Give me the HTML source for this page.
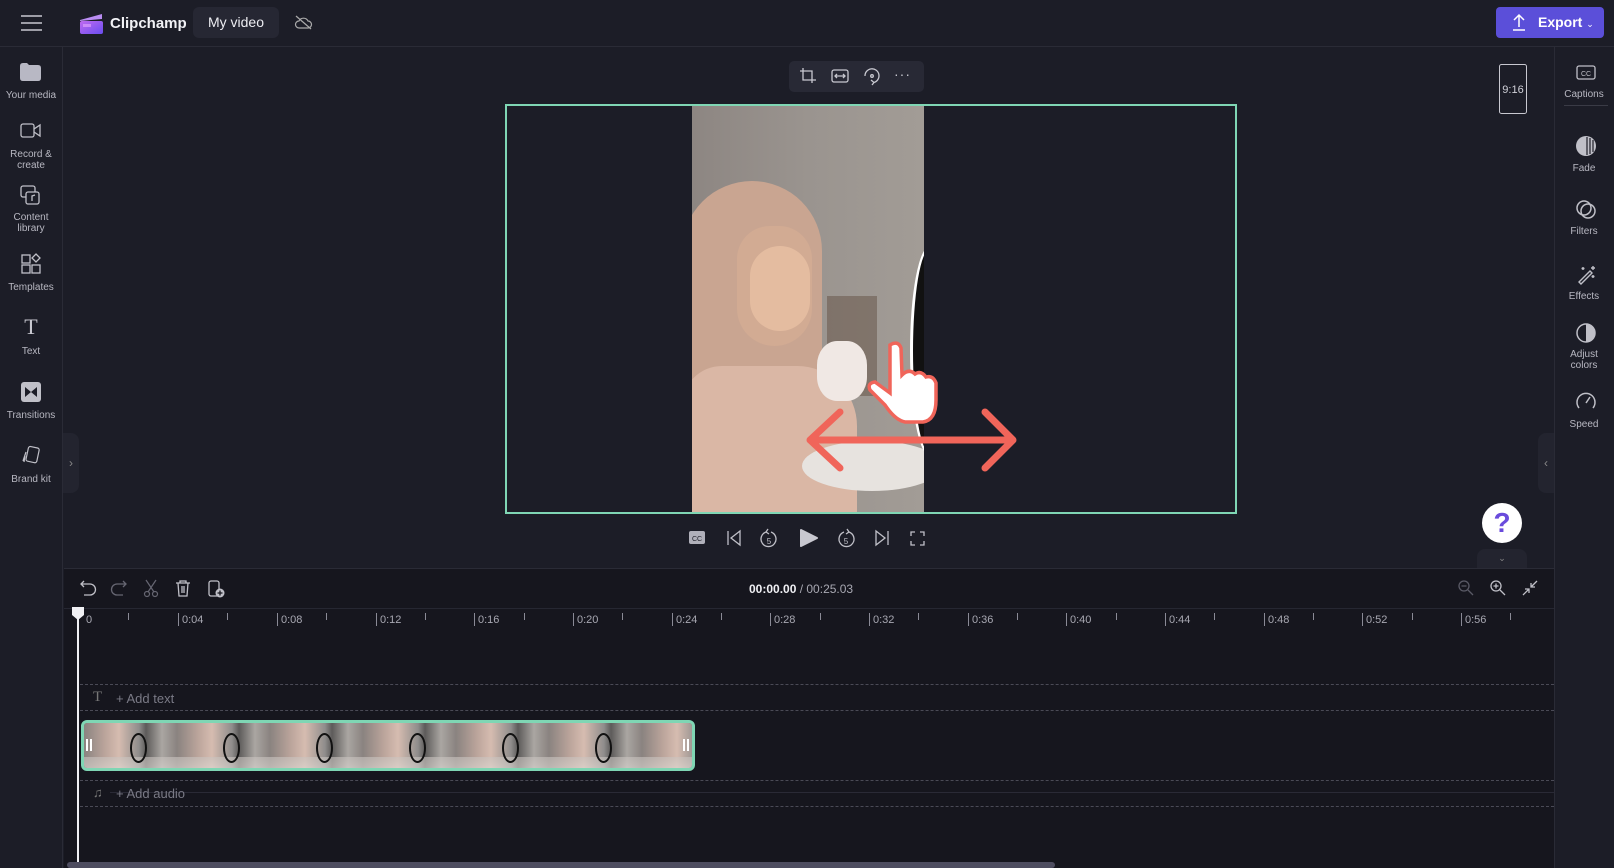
<!DOCTYPE html>
<html><head><meta charset="utf-8"><style>
*{margin:0;padding:0;box-sizing:border-box}
body{width:1614px;height:868px;overflow:hidden;background:#1c1d27;font-family:"Liberation Sans",sans-serif;color:#d0d0d8;position:relative}
.a{position:absolute}
.lbl{position:absolute;width:62px;text-align:center;font-size:10px;color:#b8b8c2;line-height:11px}
.rl{position:absolute;left:1554px;width:60px;text-align:center;font-size:10px;color:#b8b8c2;line-height:11px}
svg{position:absolute;overflow:visible}
.tk{position:absolute;top:613px;width:1px;height:13px;background:#8a8a96}
.mt{position:absolute;top:613px;width:1px;height:7px;background:#8a8a96}
.tl{position:absolute;top:614px;font-size:11px;color:#a8a8b2}
.dash{position:absolute;left:80px;width:1474px;height:0;border-top:1px dashed #4a4a56}
.ring{position:absolute;top:10px;width:17px;height:30px;border:2.5px solid #111;border-radius:50%}
</style></head><body>
<!-- top bar -->
<div class="a" style="left:0;top:0;width:1614px;height:47px;background:#1c1d27;border-bottom:1px solid #2a2b36"></div>
<svg style="left:21px;top:15px" width="21" height="16"><g stroke="#c8c8d0" stroke-width="1.6"><line x1="0" y1="1" x2="21" y2="1"/><line x1="0" y1="8" x2="21" y2="8"/><line x1="0" y1="15" x2="21" y2="15"/></g></svg>
<svg style="left:79px;top:11px" width="25" height="24"><defs><linearGradient id="lg" x1="0" y1="0" x2="1" y2="1"><stop offset="0" stop-color="#c06af0"/><stop offset="1" stop-color="#6a4df0"/></linearGradient></defs><path d="M1 9 L23 3 L23 8 L1 10Z" fill="#b98cf2"/><rect x="1" y="10" width="23" height="13" rx="2" fill="url(#lg)"/><rect x="4" y="13" width="8" height="3" fill="#e4a6ff" opacity=".6"/></svg>
<div class="a" style="left:110px;top:15px;font-size:15px;color:#f2f2f6;font-weight:bold">Clipchamp</div>
<div class="a" style="left:193px;top:7px;width:86px;height:31px;background:#262733;border-radius:6px;font-size:14px;color:#ededf2;text-align:center;line-height:31px">My video</div>
<svg style="left:295px;top:15px" width="17" height="15"><path d="M4 13 H13 A3.5 3.5 0 0 0 13 6 A5 5 0 0 0 4 6 A3.5 3.5 0 0 0 4 13Z" fill="none" stroke="#aaa" stroke-width="1.2"/><line x1="1" y1="1" x2="16" y2="14" stroke="#aaa" stroke-width="1.2"/></svg>
<div class="a" style="left:1496px;top:7px;width:108px;height:31px;background:#5b4fd9;border-radius:4px;color:#fff;font-size:14px;font-weight:bold;line-height:31px;padding-left:42px">Export <span style="font-weight:normal;font-size:9px">&#8964;</span></div>
<svg style="left:1512px;top:14px" width="14" height="17"><g stroke="#fff" stroke-width="1.5" fill="none"><path d="M7 13 V1 M2 6 L7 1 L12 6"/><line x1="1" y1="16" x2="13" y2="16"/></g></svg>

<!-- left sidebar -->
<div class="a" style="left:62px;top:47px;width:1px;height:821px;background:#2a2b36"></div>
<svg style="left:20px;top:63px" width="21" height="18"><path d="M0 3 Q0 0 3 0 H7 L9 2 H18 Q21 2 21 5 V15 Q21 18 18 18 H3 Q0 18 0 15Z" fill="#b8b8c4"/></svg>
<div class="lbl" style="left:0;top:90px">Your media</div>
<svg style="left:20px;top:123px" width="21" height="16"><g fill="none" stroke="#c0c0c8" stroke-width="1.3"><rect x="1" y="1" width="13" height="13" rx="2"/><path d="M14 6 L20 2 V13 L14 9"/></g></svg>
<div class="lbl" style="left:0;top:149px">Record &amp;<br>create</div>
<svg style="left:20px;top:185px" width="21" height="20"><g fill="none" stroke="#c0c0c8" stroke-width="1.3"><rect x="1" y="1" width="14" height="11" rx="2"/><rect x="6" y="7" width="13" height="12" rx="2" fill="#1c1d27"/><path d="M12 16 V11 L15 10" /></g></svg>
<div class="lbl" style="left:0;top:212px">Content<br>library</div>
<svg style="left:21px;top:254px" width="20" height="20"><g fill="none" stroke="#c0c0c8" stroke-width="1.3"><rect x="1" y="1" width="8" height="8"/><rect x="1" y="11" width="8" height="8"/><rect x="11" y="11" width="8" height="8"/><path d="M15 0 L19 4 L15 8 L11 4Z"/></g></svg>
<div class="lbl" style="left:0;top:282px">Templates</div>
<div class="a" style="left:0;width:62px;top:314px;text-align:center;font-family:'Liberation Serif',serif;font-size:22px;color:#c8c8d0">T</div>
<div class="lbl" style="left:0;top:346px">Text</div>
<svg style="left:21px;top:382px" width="20" height="20"><rect x="0" y="0" width="20" height="20" rx="3" fill="#c0c0c8"/><path d="M4 5 L10 10 L4 15Z M16 5 L10 10 L16 15Z" fill="#1c1d27"/></svg>
<div class="lbl" style="left:0;top:410px">Transitions</div>
<svg style="left:21px;top:446px" width="20" height="20"><g fill="none" stroke="#c0c0c8" stroke-width="1.2"><rect x="6" y="1" width="11" height="15" rx="2" transform="rotate(12 11 9)"/><path d="M5 6 L2 15 M4 10 L3 16"/></g></svg>
<div class="lbl" style="left:0;top:474px">Brand kit</div>
<div class="a" style="left:63px;top:433px;width:16px;height:60px;background:#23242f;border-radius:0 8px 8px 0;color:#888;font-size:12px;line-height:60px;text-align:center">›</div>

<!-- right sidebar -->
<div class="a" style="left:1554px;top:47px;width:1px;height:821px;background:#2a2b36"></div>
<svg style="left:1576px;top:65px" width="20" height="15"><rect x="1" y="1" width="18" height="13" rx="2" fill="none" stroke="#c0c0c8" stroke-width="1.3"/><text x="10" y="11" font-size="7" fill="#c0c0c8" text-anchor="middle" font-family="Liberation Sans">CC</text></svg>
<div class="rl" style="top:89px">Captions</div>
<div class="a" style="left:1564px;top:105px;width:44px;height:1px;background:#3a3b46"></div>
<svg style="left:1576px;top:136px" width="20" height="20"><circle cx="10" cy="10" r="10" fill="#c0c0c8"/><g stroke="#1c1d27" stroke-width="1.2"><line x1="11" y1="1" x2="11" y2="19"/><line x1="14" y1="2" x2="14" y2="18"/><line x1="17" y1="4" x2="17" y2="16"/></g></svg>
<div class="rl" style="top:163px">Fade</div>
<svg style="left:1576px;top:200px" width="20" height="19"><g fill="none" stroke="#c0c0c8" stroke-width="1.5"><circle cx="8" cy="8" r="7"/><circle cx="12" cy="11" r="7"/></g></svg>
<div class="rl" style="top:226px">Filters</div>
<svg style="left:1577px;top:265px" width="19" height="19"><g fill="none" stroke="#c0c0c8" stroke-width="1.4"><path d="M2 17 L13 6 L15 8 L4 19Z"/><path d="M16 1 V5 M14 3 H18 M6 2 V5 M4.5 3.5 H7.5 M16 10 V13 M14.5 11.5 H17.5"/></g></svg>
<div class="rl" style="top:291px">Effects</div>
<svg style="left:1576px;top:323px" width="20" height="20"><circle cx="10" cy="10" r="9" fill="none" stroke="#c0c0c8" stroke-width="1.5"/><path d="M10 1 A9 9 0 0 1 10 19Z" fill="#c0c0c8"/></svg>
<div class="rl" style="top:349px">Adjust<br>colors</div>
<svg style="left:1576px;top:392px" width="20" height="18"><g fill="none" stroke="#c0c0c8" stroke-width="1.5"><path d="M3 16 A9 9 0 1 1 17 16"/><line x1="10" y1="11" x2="14" y2="5"/></g></svg>
<div class="rl" style="top:419px">Speed</div>
<div class="a" style="left:1538px;top:433px;width:16px;height:60px;background:#23242f;border-radius:8px 0 0 8px;color:#888;font-size:12px;line-height:60px;text-align:center">‹</div>

<!-- preview -->
<div class="a" style="left:789px;top:61px;width:135px;height:31px;background:#282935;border-radius:5px"></div>
<svg style="left:800px;top:68px" width="16" height="16"><g fill="none" stroke="#c8c8d0" stroke-width="1.3"><path d="M3 0 V12 H16 M0 3 H12 V15"/></g></svg>
<svg style="left:831px;top:69px" width="18" height="14"><g fill="none" stroke="#c8c8d0" stroke-width="1.3"><rect x="1" y="1" width="16" height="12" rx="2"/><path d="M4 7 H14 M6 5 L4 7 L6 9 M12 5 L14 7 L12 9"/></g></svg>
<svg style="left:863px;top:67px" width="18" height="18"><g fill="none" stroke="#c8c8d0" stroke-width="1.3"><path d="M2 9 A7 7 0 1 1 11 15.5 M11 15.5 L8 13 M11 15.5 L9 18"/><circle cx="9" cy="9" r="1.3"/></g></svg>
<div class="a" style="left:894px;top:66px;color:#c8c8d0;font-size:14px;letter-spacing:1px">···</div>
<div class="a" style="left:505px;top:104px;width:732px;height:410px;border:2px solid #7fd6b4"></div>
<div class="a" style="left:692px;top:106px;width:232px;height:406px;background:linear-gradient(90deg,#8d8682 0%,#9a948f 50%,#a29c96 100%);overflow:hidden">
  <div class="a" style="left:135px;top:190px;width:50px;height:100px;background:#6c5c50;opacity:.6"></div>
  <div class="a" style="left:-10px;top:75px;width:140px;height:260px;background:#c9a591;border-radius:70px 70px 30px 10px"></div>
  <div class="a" style="left:45px;top:120px;width:75px;height:120px;background:#d2ab93;border-radius:35px 35px 40px 40px"></div>
  <div class="a" style="left:58px;top:140px;width:60px;height:85px;background:#e4bca0;border-radius:30px"></div>
  <div class="a" style="left:-10px;top:260px;width:175px;height:150px;background:#dab7a5;border-radius:40px 60px 0 0"></div>
  <div class="a" style="left:110px;top:335px;width:140px;height:50px;background:#e7e3df;border-radius:50%"></div>
  <div class="a" style="left:125px;top:235px;width:50px;height:60px;background:#f0e8e4;border-radius:40%"></div>
  <div class="a" style="left:218px;top:140px;width:40px;height:210px;border:3px solid #fff;border-radius:50%;background:#111"></div>
</div>
<svg style="left:805px;top:340px" width="210" height="135"><g fill="none" stroke="#f0655a" stroke-width="7" stroke-linecap="round" stroke-linejoin="round"><path d="M5 100 H208 M35 72 L5 100 L35 128 M180 72 L208 100 L180 128"/></g><path d="M85 5 Q93 0 96 8 L97 35 Q104 28 110 34 Q116 30 121 37 Q128 35 131 43 L131 60 Q131 80 118 82 L100 82 Q90 80 80 65 L65 50 Q62 43 70 42 L85 53Z" fill="#fff" stroke="#f0655a" stroke-width="3.5"/></svg>
<svg style="left:1499px;top:64px" width="28" height="50"><rect x=".5" y=".5" width="27" height="49" rx="2" fill="none" stroke="#c8c8d0"/><text x="14" y="29" font-size="11" fill="#d0d0d8" text-anchor="middle" font-family="Liberation Sans">9:16</text></svg>
<div class="a" style="left:1482px;top:503px;width:40px;height:40px;border-radius:50%;background:#fff;text-align:center;font-size:28px;font-weight:bold;line-height:40px;color:#6a4bdc">?</div>
<div class="a" style="left:1477px;top:549px;width:50px;height:19px;background:#23242f;border-radius:8px 8px 0 0;color:#888;font-size:9px;text-align:center;line-height:19px">&#8964;</div>

<!-- playback controls -->
<svg style="left:689px;top:531px" width="16" height="14"><rect width="16" height="13" rx="2" fill="#b0b0ba"/><text x="8" y="10" font-size="7" fill="#1c1d27" text-anchor="middle" font-family="Liberation Sans">CC</text></svg>
<svg style="left:727px;top:530px" width="14" height="16"><g fill="none" stroke="#c0c0c8" stroke-width="1.3"><line x1="1" y1="1" x2="1" y2="15"/><path d="M13 1 L4 8 L13 15Z"/></g></svg>
<svg style="left:760px;top:529px" width="18" height="19"><g fill="none" stroke="#c0c0c8" stroke-width="1.3"><path d="M6 3 A7.5 7.5 0 1 0 11 3 M6 3 L8 0 M6 3 L9 5"/></g><text x="9" y="15" font-size="8" fill="#c0c0c8" text-anchor="middle" font-family="Liberation Sans">5</text></svg>
<svg style="left:800px;top:529px" width="18" height="18"><path d="M1 1 L17 9 L1 17Z" fill="#c8c8d0" stroke="#c8c8d0" stroke-linejoin="round" stroke-width="2"/></svg>
<svg style="left:837px;top:529px" width="18" height="19"><g fill="none" stroke="#c0c0c8" stroke-width="1.3"><path d="M12 3 A7.5 7.5 0 1 1 7 3 M12 3 L10 0 M12 3 L9 5"/></g><text x="9" y="15" font-size="8" fill="#c0c0c8" text-anchor="middle" font-family="Liberation Sans">5</text></svg>
<svg style="left:875px;top:530px" width="14" height="16"><g fill="none" stroke="#c0c0c8" stroke-width="1.3"><line x1="13" y1="1" x2="13" y2="15"/><path d="M1 1 L10 8 L1 15Z"/></g></svg>
<svg style="left:910px;top:531px" width="15" height="15"><g fill="none" stroke="#c0c0c8" stroke-width="1.3"><path d="M1 5 V1 H5 M10 1 H14 V5 M14 10 V14 H10 M5 14 H1 V10"/></g></svg>

<!-- timeline -->
<div class="a" style="left:64px;top:568px;width:1490px;height:300px;background:#16161e;border-top:1px solid #2a2b36"></div>
<div class="a" style="left:64px;top:608px;width:1490px;height:1px;background:#262732"></div>
<svg style="left:80px;top:580px" width="16" height="17"><path d="M4 1 L1 4 L4 7 M1 4 H10 A5 5 0 0 1 10 15 H4" fill="none" stroke="#c0c0c8" stroke-width="1.3"/></svg>
<svg style="left:111px;top:580px" width="16" height="17"><path d="M12 1 L15 4 L12 7 M15 4 H6 A5 5 0 0 0 6 15 H12" fill="none" stroke="#666672" stroke-width="1.3"/></svg>
<svg style="left:143px;top:580px" width="16" height="17"><g fill="none" stroke="#666672" stroke-width="1.2"><circle cx="4" cy="14" r="2.5"/><circle cx="12" cy="14" r="2.5"/><path d="M5 12 L13 0 M11 12 L3 0"/></g></svg>
<svg style="left:175px;top:580px" width="16" height="17"><g fill="none" stroke="#c0c0c8" stroke-width="1.3"><path d="M1 3 H15 M5 3 V1 H11 V3 M3 3 L4 16 H12 L13 3 M7 6 V13 M9 6 V13"/></g></svg>
<svg style="left:208px;top:580px" width="17" height="18"><g fill="none" stroke="#c0c0c8" stroke-width="1.3"><rect x="1" y="1" width="10" height="15" rx="2"/></g><circle cx="12" cy="13" r="4.5" fill="#c0c0c8"/><path d="M12 10.5 V15.5 M9.5 13 H14.5" stroke="#16161e" stroke-width="1.3"/></svg>
<div class="a" style="left:749px;top:582px;font-size:12px;color:#f0f0f4"><b>00:00.00</b> <span style="color:#a8a8b2">/ 00:25.03</span></div>
<svg style="left:1458px;top:580px" width="16" height="16"><g fill="none" stroke="#5a5a66" stroke-width="1.3"><circle cx="6" cy="6" r="5"/><path d="M10 10 L15 15 M3.5 6 H8.5"/></g></svg>
<svg style="left:1490px;top:580px" width="16" height="16"><g fill="none" stroke="#c0c0c8" stroke-width="1.3"><circle cx="6" cy="6" r="5"/><path d="M10 10 L15 15 M3.5 6 H8.5 M6 3.5 V8.5"/></g></svg>
<svg style="left:1522px;top:580px" width="16" height="16"><g fill="none" stroke="#c0c0c8" stroke-width="1.3"><path d="M15 1 L9 7 M9 3 V7 H13 M1 15 L7 9 M3 9 H7 V13"/></g></svg>

<!-- ruler -->
<div class="tl" style="left:86px">0</div>
<div class="mt" style="left:128px"></div>
<div class="tk" style="left:178px"></div><div class="tl" style="left:182px">0:04</div><div class="mt" style="left:227px"></div>
<div class="tk" style="left:277px"></div><div class="tl" style="left:281px">0:08</div><div class="mt" style="left:326px"></div>
<div class="tk" style="left:376px"></div><div class="tl" style="left:380px">0:12</div><div class="mt" style="left:425px"></div>
<div class="tk" style="left:474px"></div><div class="tl" style="left:478px">0:16</div><div class="mt" style="left:524px"></div>
<div class="tk" style="left:573px"></div><div class="tl" style="left:577px">0:20</div><div class="mt" style="left:622px"></div>
<div class="tk" style="left:672px"></div><div class="tl" style="left:676px">0:24</div><div class="mt" style="left:721px"></div>
<div class="tk" style="left:770px"></div><div class="tl" style="left:774px">0:28</div><div class="mt" style="left:820px"></div>
<div class="tk" style="left:869px"></div><div class="tl" style="left:873px">0:32</div><div class="mt" style="left:918px"></div>
<div class="tk" style="left:968px"></div><div class="tl" style="left:972px">0:36</div><div class="mt" style="left:1017px"></div>
<div class="tk" style="left:1066px"></div><div class="tl" style="left:1070px">0:40</div><div class="mt" style="left:1116px"></div>
<div class="tk" style="left:1165px"></div><div class="tl" style="left:1169px">0:44</div><div class="mt" style="left:1214px"></div>
<div class="tk" style="left:1264px"></div><div class="tl" style="left:1268px">0:48</div><div class="mt" style="left:1313px"></div>
<div class="tk" style="left:1362px"></div><div class="tl" style="left:1366px">0:52</div><div class="mt" style="left:1412px"></div>
<div class="tk" style="left:1461px"></div><div class="tl" style="left:1465px">0:56</div><div class="mt" style="left:1510px"></div>

<!-- tracks -->
<div class="dash" style="top:684px"></div>
<div class="dash" style="top:710px"></div>
<div class="a" style="left:93px;top:689px;font-family:'Liberation Serif',serif;font-size:15px;color:#777"><span>T</span></div>
<div class="a" style="left:116px;top:691px;font-size:13px;color:#7a7a86">+ Add text</div>
<div class="a" style="left:81px;top:720px;width:614px;height:51px;border:3px solid #7fd6b4;border-radius:6px;background:#6e6c6a;overflow:hidden">
  <div class="a" style="left:0;top:0;width:612px;height:48px;background:repeating-linear-gradient(90deg,#8a8380 0,#b9a39a 20px,#d6bcb0 35px,#8f8d8c 55px,#5d5b5a 62px,#aaa6a2 78px,#8a8380 93px)"></div>
  <div class="a" style="left:0;top:34px;width:612px;height:14px;background:linear-gradient(#c9c3bf,#e2ddd8);opacity:.6"></div>
  <div class="ring" style="left:46px"></div><div class="ring" style="left:139px"></div><div class="ring" style="left:232px"></div><div class="ring" style="left:325px"></div><div class="ring" style="left:418px"></div><div class="ring" style="left:511px"></div>
</div>
<div class="a" style="left:86px;top:739px;width:2px;height:12px;background:#fff;box-shadow:4px 0 #fff"></div>
<div class="a" style="left:683px;top:739px;width:2px;height:12px;background:#fff;box-shadow:4px 0 #fff"></div>
<div class="dash" style="top:780px"></div>
<div class="dash" style="top:806px"></div>
<div class="a" style="left:110px;top:792px;width:1444px;height:1px;background:#2a2a36"></div>
<div class="a" style="left:93px;top:785px;font-size:13px;color:#777">♫</div>
<div class="a" style="left:116px;top:786px;font-size:13px;color:#7a7a86">+ Add audio</div>

<!-- playhead -->
<div class="a" style="left:77px;top:608px;width:2px;height:260px;background:#f0f0f4"></div>
<svg style="left:72px;top:607px" width="12" height="14"><path d="M0 0 H12 V8 L6 13 L0 8Z" fill="#f0f0f4"/></svg>

<!-- scrollbar -->
<div class="a" style="left:67px;top:862px;width:988px;height:6px;background:#4e4d60;border-radius:3px"></div>
</body></html>
